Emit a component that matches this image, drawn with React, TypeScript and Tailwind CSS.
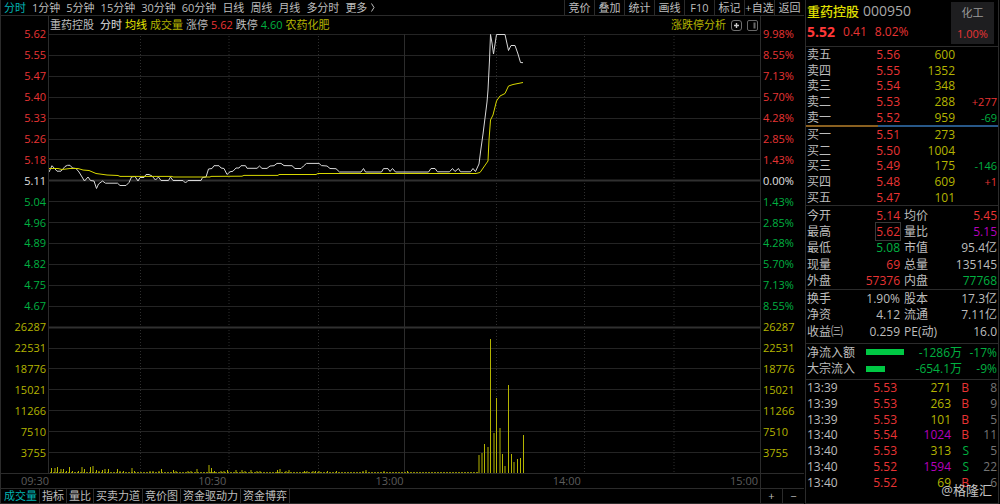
import React from "react";

const PERIODS = ["分时", "1分钟", "5分钟", "15分钟", "30分钟", "60分钟", "日线", "周线", "月线", "多分时", "更多"];
const TOOLS = ["竞价", "叠加", "统计", "画线", "F10", "标记", "+自选", "返回"];
const PANES = ["成交量", "指标", "量比", "买卖力道", "竞价图", "资金驱动力", "资金博弈"];

const RED = "text-[#e83434]";
const GREEN = "text-[#00b040]";
const YELLOW = "text-[#b4b400]";
const GREY = "text-[#bdbdbd]";
const PURPLE = "text-[#b400bc]";
const DIM = "text-[#747474]";

const VOLUMES = ["26287", "22531", "18776", "15021", "11266", "7510", "3755"];
const PRICES = ["5.62", "5.55", "5.47", "5.40", "5.33", "5.26", "5.18", "5.11", "5.04", "4.96", "4.89", "4.82", "4.75", "4.67"];
const PERCENTS = ["9.98%", "8.55%", "7.13%", "5.70%", "4.28%", "2.85%", "1.43%", "0.00%", "1.43%", "2.85%", "4.28%", "5.70%", "7.13%", "8.55%"];

type Order = { name: string; price: string; volume: string; change?: string };

const SELLS: Order[] = [
  { name: "卖五", price: "5.56", volume: "600" },
  { name: "卖四", price: "5.55", volume: "1352" },
  { name: "卖三", price: "5.54", volume: "348" },
  { name: "卖二", price: "5.53", volume: "288", change: "+277" },
  { name: "卖一", price: "5.52", volume: "959", change: "-69" },
];
const BUYS: Order[] = [
  { name: "买一", price: "5.51", volume: "273" },
  { name: "买二", price: "5.50", volume: "1004" },
  { name: "买三", price: "5.49", volume: "175", change: "-146" },
  { name: "买四", price: "5.48", volume: "609", change: "+1" },
  { name: "买五", price: "5.47", volume: "101" },
];

type Stat = [string, string, string, string, string, string];
const QUOTE: Stat[] = [
  ["今开", "5.14", RED, "均价", "5.45", RED],
  ["最高", "5.62", RED, "量比", "5.15", PURPLE],
  ["最低", "5.08", GREEN, "市值", "95.4亿", GREY],
  ["现量", "69", RED, "总量", "135145", GREY],
  ["外盘", "57376", RED, "内盘", "77768", GREEN],
];
const FUNDAMENTALS: Stat[] = [
  ["换手", "1.90%", GREY, "股本", "17.3亿", GREY],
  ["净资", "4.12", GREY, "流通", "7.11亿", GREY],
  ["收益㈢", "0.259", GREY, "PE(动)", "16.0", GREY],
];

const TICKS = [
  ["13:39", "5.53", "271", "B", "8"],
  ["13:39", "5.53", "263", "B", "9"],
  ["13:39", "5.53", "101", "B", "5"],
  ["13:40", "5.54", "1024", "B", "11"],
  ["13:40", "5.53", "313", "S", "5"],
  ["13:40", "5.52", "1594", "S", "22"],
  ["13:40", "5.52", "69", "B", "6"],
];

const PRICE_LINE =
  "49,172 52,165.7 57,171.2 61,171.2 65,166.5 67.5,165.3 70,165.3 72.5,168 76,168.5 79,172 84.5,181 88,177 90.5,180.5 94,181 96.5,188.5 98.5,184 102.5,181 105.5,183.2 117.5,183.2 120,185.5 126,185.5 129,182.5 131.5,177 135,176.5 138,181 140,177.5 144,177.5 146,174.5 149,174.5 152,176 155.5,180 158.5,177 161,180.5 168.5,180.5 170.5,177 173,180.5 183,180.5 185.5,183 188,180.5 201,180.5 202.5,177.5 206,177 208.5,169 212,168.5 214,165.7 219,165.7 221,168 224,168.5 227,174.5 230,171.8 233,171.2 236,168 239,168 241,165.7 245.5,165.7 247,168.3 257,168.3 259.5,166 262,168.4 267,168.4 270,166 274,165.7 277,163.4 281,163.4 284,165.6 292,165.7 295,168.5 301,168.5 303.5,166 306.5,163.4 319,163.4 321.5,165.6 327,166 330,168.5 336,168.7 339.5,172 361,172 363.5,168.5 365.5,172 381.5,172 383.5,168.6 388,168.6 390,171.5 392.5,168.5 395.5,172 428.5,172 431,168.5 435,168.5 437.5,171.8 449.5,171.8 452.5,168.5 455,171.5 458.5,168.5 460.5,171.8 470.5,171.8 473,168.5 475.5,171.5 479,164 480.5,152 483,134 487,102 488,90 489.5,60 490.5,34.5 492,43 493.5,54 496.5,34.5 505,34.5 508.5,50.5 511,45.5 515,45.5 518,54 520.5,62.5 523,62.7";
const AVERAGE_LINE =
  "49,168.5 58,168.5 62,169.5 70,168.5 78,168.5 83,170 89,170.5 96,173.5 107,175 118,175.5 120,176.4 172,176.4 173,177 210,177 211,176.4 242,176.2 244,175.4 278,175.4 279,174.5 316,174.5 318,173.5 476,173.5 480,172.5 488,161 489,140 490.5,120 493,115 496.5,101 500,96 505,93.5 508.5,86 513,84.5 523,82.5";

const SPIKES: [number, number][] = [
  [51.5, 5], [55, 5], [57.5, 6], [61, 4], [63.5, 4], [66.5, 2], [69.5, 6], [72.5, 2], [78.5, 2], [82, 6], [84.5, 4], [90.5, 6],
  [93, 7], [96.5, 3], [99, 2], [102.5, 3], [105, 4], [108.5, 4], [117.5, 4], [120, 2], [123.5, 2], [132, 5], [134.5, 2],
  [150, 2], [153, 2], [159, 2], [161.5, 4], [173.5, 3], [176, 2], [188, 2], [191, 2], [197, 4], [209, 8], [211.5, 5],
  [214.5, 2], [221, 2], [224, 2], [227.5, 3], [236, 3], [242, 3], [245, 2], [251, 3], [257, 2], [260, 2], [277.5, 3],
  [280, 4], [286, 2], [289, 3], [304.5, 2], [307, 2], [313, 2], [315.5, 2], [319, 2], [327.5, 2], [336.5, 2], [363, 2], [366, 3],
  [384, 2], [407.5, 2],
  [479, 18], [482, 20], [484.5, 29], [488, 26], [490.5, 134], [494, 40], [496.5, 75], [500, 45], [502.5, 19], [505, 7],
  [508.5, 88], [511.5, 19], [514, 11], [517.5, 14], [520.5, 15], [523.5, 38],
];
const BASE = Array.from({ length: 143 }, (_, i) => 51 + i * 3);
const ROWS = Array.from({ length: 21 }, (_, i) => i);
const QUARTERS = [140.5, 229, 318.5, 496.5, 584.5, 674];

function IntradayChart() {
  return (
    <svg className="block size-full" viewBox="49 34 711 439" preserveAspectRatio="none" fill="none" role="img" aria-label="分时走势">
      {ROWS.map((i) => {
        const y = Math.round(34 + i * 20.9) + 0.5;
        const strong = i === 7 || i === 14;
        return <line key={i} x1="49" x2="760" y1={y} y2={y} stroke={strong ? "#303030" : "#242424"} strokeWidth={strong ? 2 : 1} />;
      })}
      {QUARTERS.map((x) => (
        <line key={x} x1={x} x2={x} y1="36" y2="473" stroke="#2e2e2e" strokeDasharray="1 2" />
      ))}
      <line x1="404.5" x2="404.5" y1="34" y2="473" stroke="#2c2c2c" />
      {BASE.map((x) => (
        <line key={x} x1={x} x2={x} y1="472" y2="473" stroke="#8c8c00" strokeWidth="2" />
      ))}
      {SPIKES.map(([x, h]) => (
        <line key={x} x1={x} x2={x} y1={473 - h} y2="473" stroke="#b4b400" />
      ))}
      <polyline points={PRICE_LINE} stroke="#d8d8d8" />
      <polyline points={AVERAGE_LINE} stroke="#d8d800" />
    </svg>
  );
}

function Axis({ top, side }: { top: string[]; side: string }) {
  return (
    <ul className={`grid flex-1 auto-rows-fr items-center pt-2 pb-[10px] ${side}`}>
      {top.map((t, i) => (
        <li key={i} className={i < 7 ? RED : i === 7 ? "text-[#e0e0e0]" : GREEN}>{t}</li>
      ))}
      {VOLUMES.map((t) => (
        <li key={t} className={YELLOW}>{t}</li>
      ))}
    </ul>
  );
}

function OrderTable({ rows, label }: { rows: Order[]; label: string }) {
  return (
    <table aria-label={label} className="h-full w-full table-fixed text-right">
      <colgroup>
        <col className="w-[39px]" />
        <col className="w-[54px]" />
        <col className="w-[55px]" />
        <col />
      </colgroup>
      <tbody>
        {rows.map((r) => (
          <tr key={r.name}>
            <th scope="row" className={`text-left font-normal ${GREY}`}>{r.name}</th>
            <td className={RED}>{r.price}</td>
            <td className={YELLOW}>{r.volume}</td>
            <td className={`text-[11px] ${r.change?.startsWith("-") ? GREEN : RED}`}>{r.change}</td>
          </tr>
        ))}
      </tbody>
    </table>
  );
}

function StatTable({ rows, label }: { rows: Stat[]; label: string }) {
  return (
    <table aria-label={label} className="h-full w-full table-fixed text-right whitespace-nowrap">
      <colgroup>
        <col className="w-[39px]" />
        <col className="w-[54px]" />
        <col className="w-[42px]" />
        <col />
      </colgroup>
      <tbody>
        {rows.map(([a, av, ac, b, bv, bc]) => (
          <tr key={a}>
            <th scope="row" className={`text-left font-normal ${GREY}`}>{a}</th>
            <td className={ac}>
              <span className={a === "最高" ? "outline outline-[#383838]" : ""}>{av}</span>
            </td>
            <th scope="row" className={`pl-1 text-left font-normal ${GREY}`}>{b}</th>
            <td className={bc}>{bv}</td>
          </tr>
        ))}
      </tbody>
    </table>
  );
}

function QuotePanel() {
  return (
    <aside className="relative mr-px flex w-[194px] shrink-0 flex-col border-x border-[#2b2b2b] text-[12px] leading-[15px]">
      <header className="flex h-[47px] shrink-0 justify-between border-b border-[#2b2b2b] pl-px">
        <div className="pt-[3px]">
          <h1 className="flex items-center gap-1 text-[13px] leading-4 font-medium text-[#e0e000]">
            重药控股 <span className="text-[14px] font-normal text-[#a8a8a8]">000950</span>
          </h1>
          <p className={`flex items-center gap-2 pt-[5px] leading-4 ${RED}`}>
            <strong className="text-[14px] text-[#ff3838]">5.52</strong>
            <span>0.41</span>
            <span>8.02%</span>
          </p>
        </div>
        <a href="#sector" className="mt-[2px] mr-[4px] flex h-[42px] w-[43px] flex-col items-center justify-around bg-[#1e1e20] text-[11px] text-[#9a9a9a]">
          化工 <span className={RED}>1.00%</span>
        </a>
      </header>
      <section className="h-[78px] px-px">
        <OrderTable rows={SELLS} label="卖盘" />
      </section>
      <div className="flex h-[2px] shrink-0">
        <span className="w-[72px] bg-[#8a6020]" />
        <span className="flex-1 bg-[#285888]" />
      </div>
      <section className="h-[79px] border-b border-[#2b2b2b] px-px">
        <OrderTable rows={BUYS} label="买盘" />
      </section>
      <section className="h-[84px] border-b border-[#2b2b2b] px-px pt-px">
        <StatTable rows={QUOTE} label="行情" />
      </section>
      <section className="h-[54px] border-b border-[#2b2b2b] px-px pb-[3px]">
        <StatTable rows={FUNDAMENTALS} label="基本面" />
      </section>
      <section className={`grid h-[36px] auto-rows-fr items-center border-b border-[#2b2b2b] px-px pb-[2px] ${GREEN}`}>
        <div className="flex items-center">
          <span className={`w-[59px] ${GREY}`}>净流入额</span>
          <span className="h-[6px] w-[38px] bg-[#00c844]" />
          <span className="flex-1 text-right">-1286万</span>
          <span className="w-[35px] text-right">-17%</span>
        </div>
        <div className="flex items-center">
          <span className={`w-[59px] ${GREY}`}>大宗流入</span>
          <span className="h-[6px] w-[19px] bg-[#00c844]" />
          <span className="flex-1 text-right">-654.1万</span>
          <span className="w-[35px] text-right">-9%</span>
        </div>
      </section>
      <section className="h-[110px] px-px">
        <table aria-label="成交明细" className="h-full w-full table-fixed text-right">
          <colgroup>
            <col className="w-[39px]" />
            <col className="w-[51px]" />
            <col className="w-[54px]" />
            <col className="w-[18px]" />
            <col />
          </colgroup>
          <tbody>
            {TICKS.map(([time, price, volume, side, count], i) => (
              <tr key={i}>
                <td className={`text-left ${GREY}`}>{time}</td>
                <td className={RED}>{price}</td>
                <td className={volume.length > 3 ? PURPLE : YELLOW}>{volume}</td>
                <td className={side === "B" ? RED : GREEN}>{side}</td>
                <td className={DIM}>{count}</td>
              </tr>
            ))}
          </tbody>
        </table>
      </section>
      <div className="flex-1 border-b border-[#2b2b2b]" />
      <span className="absolute right-[6px] bottom-[6px] text-[13px] leading-4 text-[#c4c4c4]">@格隆汇</span>
    </aside>
  );
}

export default function App() {
  return (
    <div className="flex h-screen min-h-[504px] bg-black font-['Open_Sans','Noto_Sans_CJK_SC',sans-serif] text-[11px] leading-[14px] whitespace-nowrap">
      <main className="mr-px flex min-w-0 flex-1 flex-col border-l border-[#2b2b2b]">
        <nav className={`flex h-4 shrink-0 justify-between border-b border-[#2b2b2b] ${GREY}`}>
          <div className="flex gap-[6px] pl-[3px]">
            {PERIODS.map((p, i) => (
              <button key={p} type="button" className={i === 0 ? "text-[#00b4b4]" : "flex items-center gap-1"}>
                {p}
                {p === "更多" && (
                  <svg width="4" height="9" viewBox="0 0 4 9" fill="none" stroke="#bdbdbd" aria-hidden="true">
                    <path d="M0.5 0.5 3 4.5 0.5 8.5" />
                  </svg>
                )}
              </button>
            ))}
          </div>
          <div className="flex">
            {TOOLS.map((t) => (
              <button key={t} type="button" className="w-[30px] border-l border-[#2b2b2b] text-center">{t}</button>
            ))}
          </div>
        </nav>

        <div className="flex min-h-0 flex-1">
          <div className="flex w-12 shrink-0 border-r border-[#2b2b2b]">
            <Axis top={PRICES} side="pr-[2px] text-right" />
          </div>
          <div className="flex min-w-0 flex-1 flex-col">
            <div className="flex h-[18px] shrink-0 items-center justify-between pr-[2px] pl-px">
              <div className={`flex gap-[3px] ${GREY}`}>
                <span className="pr-[3px]">重药控股</span>
                <span className="text-[#e0e0e0]">分时</span>
                <span className="text-[#e8e800]">均线</span>
                <span className={YELLOW}>成交量</span>
                <span>涨停</span>
                <span className={RED}>5.62</span>
                <span>跌停</span>
                <span className={GREEN}>4.60</span>
                <span className={YELLOW}>农药化肥</span>
              </div>
              <div className="flex items-center gap-[5px]">
                <a href="#limit" className={YELLOW}>涨跌停分析</a>
                <button type="button" aria-label="添加">
                  <svg className="block" width="11" height="11" viewBox="0 0 11 11" fill="none" stroke="#707070" aria-hidden="true">
                    <rect x="0.5" y="0.5" width="10" height="10" rx="2.5" />
                    <path d="M5.5 3v5M3 5.5h5" stroke="#c8c8c8" strokeWidth="1.4" />
                  </svg>
                </button>
                <button type="button" aria-label="侧栏">
                  <svg className="block" width="11" height="11" viewBox="0 0 11 11" fill="none" stroke="#686868" aria-hidden="true">
                    <rect x="0.5" y="0.5" width="10" height="10" rx="1.5" />
                    <path d="M7.5 2.5v6" strokeWidth="2" />
                  </svg>
                </button>
              </div>
            </div>
            <div className="min-h-0 flex-1">
              <IntradayChart />
            </div>
          </div>
          <div className="flex w-[44px] shrink-0 border-l border-[#2b2b2b]">
            <Axis top={PERCENTS} side="pl-[2px] text-left" />
          </div>
        </div>

        <div className="flex h-[15px] shrink-0 border-t border-[#2b2b2b] text-right text-[#5c5c5c]">
          <span className="w-12">09:30</span>
          <div className="grid flex-1 grid-cols-4 pr-[2px]">
            {["10:30", "13:00", "14:00", "15:00"].map((t) => (
              <span key={t}>{t}</span>
            ))}
          </div>
          <span className="w-[44px] border-l border-[#2b2b2b]" />
        </div>

        <footer className={`flex h-4 shrink-0 justify-between border-y border-[#2b2b2b] ${GREY}`}>
          <div className="flex pl-px">
            {PANES.map((p, i) => (
              <button key={p} type="button" className={`border-r border-[#2b2b2b] px-[2px] ${i === 0 ? "text-[#00b4b4]" : ""}`}>{p}</button>
            ))}
          </div>
          <div className="flex">
            <button type="button" aria-label="放大" className="w-[22px] border-l border-[#2b2b2b]">+</button>
            <button type="button" aria-label="缩小" className="w-[22px] border-l border-[#2b2b2b]">−</button>
          </div>
        </footer>
      </main>
      <QuotePanel />
    </div>
  );
}
